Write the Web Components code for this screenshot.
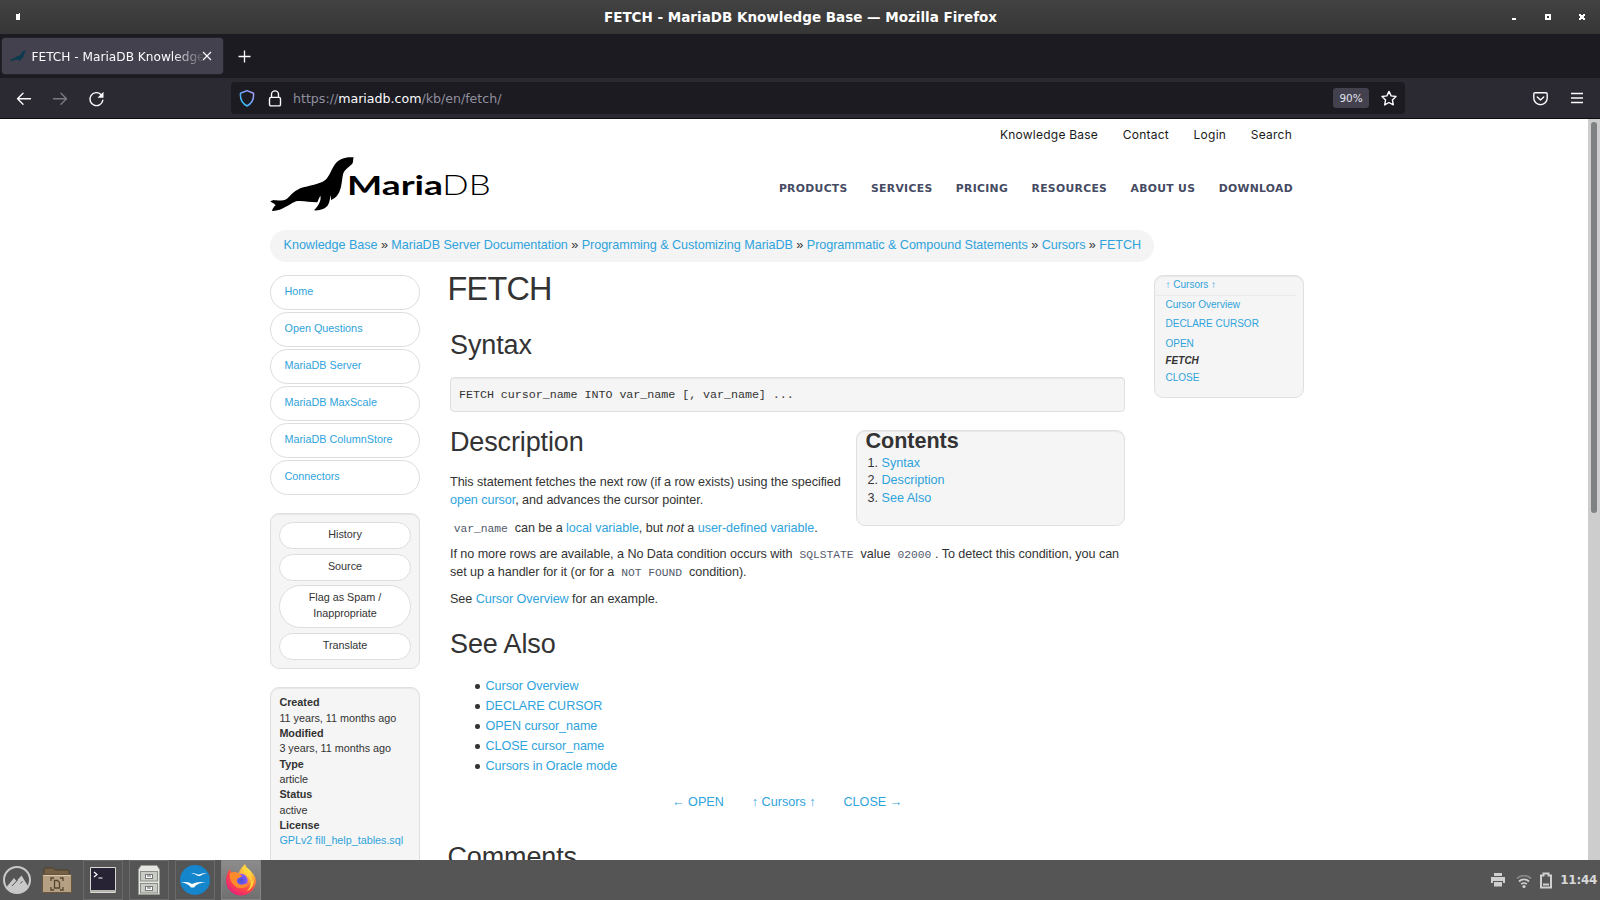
<!DOCTYPE html>
<html lang="en">
<head>
<meta charset="utf-8">
<title>FETCH - MariaDB Knowledge Base</title>
<style>
html,body{margin:0;height:100%;overflow:hidden;background:#fff}
body{font-family:"Liberation Sans",Arial,sans-serif;color:#333}
</style>
</head>
<body>
<desktop-screen></desktop-screen>
<script>
const define = (name, css, html) => customElements.define(name, class extends HTMLElement {
  constructor() {
    super();
    const t = document.createElement('template');
    t.innerHTML = `<style>*{box-sizing:border-box}:host{display:block;box-sizing:border-box}a{color:#2ea3dc;text-decoration:none}${css}</style>${html}`;
    this.attachShadow({mode: 'open'}).append(t.content.cloneNode(true));
  }
});

define('window-title', `
:host{height:34px;background:linear-gradient(#424242,#363636);color:#fff;display:grid;grid-template-columns:120px 1fr 120px;align-items:center;font:bold 13.5px/34px "DejaVu Sans",sans-serif}
b{text-align:center;white-space:nowrap;line-height:34px;padding-left:1px}
svg{display:block}
.r{display:flex;justify-content:flex-end}`,
`<svg width="40" height="34" shape-rendering="crispEdges"><path fill="#fff" d="M16 14h3v-1h1v7h-4z"/></svg>
<b>FETCH - MariaDB Knowledge Base — Mozilla Firefox</b>
<svg class="r" width="120" height="34" shape-rendering="crispEdges"><g fill="#fff"><path d="M32 18h4v2h-4z"/><path fill-rule="evenodd" d="M65 14h6v6h-6zM67 16v2h2v-2z"/><path d="M99 14h2v1h2v-1h2v2h-1v2h1v2h-2v-1h-2v1h-2v-2h1v-2h-1z"/></g></svg>`);

define('tab-strip', `
:host{height:44px;background:#1c1b22;display:flex;align-items:flex-start;padding:4px 0 0 2px;color:#fbfbfe;font:12.15px/36px "DejaVu Sans",sans-serif}
.tab{width:221px;height:36px;background:#42414d;border-radius:4px;display:flex;align-items:center;padding-left:8px;box-shadow:0 0 1px #666}
.t{width:171px;margin:2px 0 0 5.500px;line-height:36px;overflow:hidden;white-space:nowrap;-webkit-mask-image:linear-gradient(90deg,#000 82%,transparent 102%)}
svg{flex:none}
.plus{margin:12px 0 0 15px}`,
`<div class="tab"><svg width="16" height="16" viewBox="0 0 16 16"><path fill="#0c3a4e" d="M16 2.5c-3-.1-4 1.200-5 3.500-1 2-4 2-6 3.500-1.500 1.600-2.500 1.700-5 1.600l1 .9-.4 1.100c2 .2 3-1.200 5-1.400l3-.1 0 1.400c1.500-.3 2.500-1.400 3-2.600 2-.8 2-3 2.600-5 .5-1.200 1.800-1.500 1.800-2.900z"/></svg><span class="t">FETCH - MariaDB Knowledge</span><svg width="10" height="10" viewBox="0 0 10 10" style="margin-left:-1px"><path d="M1 1l8 8M9 1l-8 8" stroke="#fbfbfe" stroke-width="1.200"/></svg></div>
<svg class="plus" width="13" height="13"><path d="M6.500 .5v12M.5 6.500h12" stroke="#fbfbfe" stroke-width="1.300"/></svg>`);

define('nav-toolbar', `
:host{height:41px;background:#2b2a33;border-bottom:1px solid #0c0c0d;display:flex;align-items:center;color:#fbfbfe;font:12.15px/32px "DejaVu Sans",sans-serif;position:relative}
svg{flex:none;display:block;fill:none;stroke:#fbfbfe;stroke-width:1.400;stroke-linecap:round;stroke-linejoin:round;transform:translateY(.7px)}
.url{width:1174px;height:32px;margin-left:126.500px;background:#1c1b22;border-radius:4px;display:flex;align-items:center;padding:0 8px 0 8px}
.url svg{transform:translateY(.4px)}
.addr{margin:2px 0 0 11px;color:#8f8f9d;white-space:nowrap;flex:1;font-size:12.600px}
.addr b{font-weight:400;color:#fbfbfe}
.zoom{font-size:10.450px;line-height:19px;padding-top:1px;width:36px;text-align:center;background:#42414d;border-radius:3px;color:#e4e4ee;margin-right:12px}`,
`<svg width="16" height="16" viewBox="0 0 16 16" style="margin-left:16px"><path d="M14.500 8H1.500M7 2.500L1.500 8 7 13.500"/></svg>
<svg width="16" height="16" viewBox="0 0 16 16" style="margin-left:20px;stroke:#7a7982"><path d="M1.500 8h13M9 2.500L14.500 8 9 13.500"/></svg>
<svg width="17" height="17" viewBox="0 0 17 17" style="margin-left:19.500px"><path d="M14.800 9.600A6.500 6.500 0 1 1 13 3.800"/><path fill="#fbfbfe" stroke="none" d="M15.500 1v6h-6z"/></svg>
<div class="url">
<svg width="16" height="18" viewBox="0 0 16 18"><defs><linearGradient id="g" x1="1" y1="0" x2="0" y2="1"><stop stop-color="#b29cff"/><stop offset=".5" stop-color="#6ea6ff"/><stop offset="1" stop-color="#1cc8f0"/></linearGradient></defs><path stroke="url(#g)" stroke-width="1.500" d="M8 1.200L14.500 3.800C15 9 13 14 8 16.600 3 14 1 9 1.500 3.800z"/></svg>
<svg width="14" height="18" viewBox="0 0 14 18" style="margin-left:13px"><rect x="1.500" y="8" width="11" height="8.500" rx="1.500"/><path d="M3.500 8V5a3.500 3.500 0 0 1 7 0v3"/></svg>
<span class="addr">https://<b>mariadb.com</b>/kb/en/fetch/</span>
<span class="zoom">90%</span>
<svg width="16" height="16" viewBox="0 0 16 16"><path d="M8 1l2.100 4.500 4.900.6-3.600 3.400.9 5L8 12.100 3.700 14.500l.9-5L1 6.100l4.900-.6z"/></svg></div>
<svg width="15" height="14" viewBox="0 0 15 14" style="margin-left:127.500px"><path d="M2.200 1h10.600q1.400 0 1.400 1.400V6.500a6.700 6.500 0 0 1-13.400 0V2.400Q.8 1 2.200 1zM4.300 5.200l3.200 3 3.200-3"/></svg>
<svg width="12" height="12" viewBox="0 0 12 12" style="margin-left:23px;stroke-linecap:butt;stroke-width:1.300;transform:none"><path d="M0 1.500h12M0 6h12M0 10.500h12"/></svg>`);

define('maria-logo', `svg{display:block;overflow:visible}`,
`<svg width="220" height="57" viewBox="30 120 660 171"><path d="M281 127C262 125 240 131 230 142C217 155 213 175 200 191C188 205 160 209 130 217C103 225 94 240 81 251C68 259 50 256 41 255L31 259C37 264 44 267 47 270C41 276 37 282 36 288C48 287 57 285 66 281C83 275 92 265 108 259C130 256 153 263 172 262Q176 251 181 242C184 254 179 268 162 286C178 288 197 281 204 270C210 260 209 250 213 241L213 255C231 249 241 230 244 210C249 185 246 172 260 161L277 146C281 140 278 134 281 127Z"/>
<text x="261" y="240" font-family="Lato" font-weight="700" font-size="82" textLength="288" lengthAdjust="spacingAndGlyphs">Maria</text><text x="547" y="240" font-family="Lato" font-weight="300" font-size="82" textLength="145" lengthAdjust="spacingAndGlyphs">DB</text></svg>`);

define('site-header', `
:host{position:relative;height:111px;padding:0 11px 0 0}
.top{display:flex;justify-content:flex-end;gap:24.700px;font:12px/32px Inter,sans-serif;color:#1a1a1a;white-space:nowrap;letter-spacing:.23px;height:32px;padding-right:1px}
.row{display:flex;justify-content:space-between;height:57px;margin-top:4px}
.nav{display:flex;gap:23.350px;font:bold 10.800px/67px "DejaVu Sans",sans-serif;letter-spacing:.32px;color:#454b63;white-space:nowrap}`,
`<div class="top"><span>Knowledge Base</span><span>Contact</span><span>Login</span><span>Search</span></div>
<div class="row"><maria-logo></maria-logo><div class="nav"><span>PRODUCTS</span><span>SERVICES</span><span>PRICING</span><span>RESOURCES</span><span>ABOUT US</span><span>DOWNLOAD</span></div></div>`);

define('crumb-bar', `
:host{width:884px;height:32px;border-radius:16px;background:#f4f4f4;padding-left:13.600px;font-size:12.600px;line-height:31px;white-space:nowrap;letter-spacing:-.047px}`,
`<a>Knowledge Base</a> » <a>MariaDB Server Documentation</a> » <a>Programming &amp; Customizing MariaDB</a> » <a>Programmatic &amp; Compound Statements</a> » <a>Cursors</a> » <a>FETCH</a>`);

define('side-link', `:host{height:35px;border:1px solid #ddd;border-radius:18px;margin-bottom:2px;padding-left:13.500px;font-size:10.800px;line-height:31px}`, `<a><slot></slot></a>`);

define('kb-well', `:host{background:#f5f5f5;border:1px solid #e0e0e0;border-radius:9px;box-shadow:inset 0 1px 1px rgba(0,0,0,.06);padding:8px}`, `<slot></slot>`);

define('pill-button', `:host{background:#fff;border:1px solid #ddd;border-radius:22px;text-align:center;font-size:10.800px;line-height:16px;padding:3px 0 6px;margin-bottom:5px;height:27px}:host([tall]){height:43px;margin:-1px 0 5px}`, `<slot></slot>`);

define('side-column', `:host{width:150px}
kb-well.a{height:156px;margin:18px 0}
kb-well.i{height:240px;font-size:10.800px;line-height:15.350px;padding:7.400px 8.400px;letter-spacing:-.02px}`,
`<side-link>Home</side-link><side-link>Open Questions</side-link><side-link>MariaDB Server</side-link><side-link>MariaDB MaxScale</side-link><side-link>MariaDB ColumnStore</side-link><side-link>Connectors</side-link>
<kb-well class="a"><pill-button>History</pill-button><pill-button>Source</pill-button><pill-button tall>Flag as Spam /<br>Inappropriate</pill-button><pill-button>Translate</pill-button></kb-well>
<kb-well class="i"><b>Created</b><br>11 years, 11 months ago<br><b>Modified</b><br>3 years, 11 months ago<br><b>Type</b><br>article<br><b>Status</b><br>active<br><b>License</b><br><a>GPLv2 fill_help_tables.sql</a></kb-well>`);

define('contents-box', `:host{width:269px}
kb-well{height:96px;padding:0 9px 0 8.500px}
h3{margin:-1px 0 0;font-size:21.600px;line-height:22px;letter-spacing:-.05px}
ol{margin:2.500px 0 0;padding:0 0 0 16px;font-size:12.600px;line-height:17.500px;letter-spacing:0}
li{padding-left:0}`,
`<kb-well><h3>Contents</h3><ol><li><a>Syntax</a></li><li><a>Description</a></li><li><a>See Also</a></li></ol></kb-well>`);

define('kb-article', `:host{width:678px;padding-left:3px;font-size:12.600px;line-height:18px;white-space:nowrap;letter-spacing:-.055px}
h1,h2{font-weight:400;margin:0;letter-spacing:-.13px}
h1{font-size:32.400px;line-height:36px;margin:-4px 0 23px -2.500px;letter-spacing:-.75px}
h2{font-size:27px;line-height:30px}
pre{margin:17px 0 18px;height:35px;border:1px solid #e0e0e0;border-radius:4px;background:#f5f5f5;box-shadow:inset 0 1px 1px rgba(0,0,0,.05);font:11.700px/35px "Liberation Mono",monospace;letter-spacing:-.04px;padding-left:8px}
.d{display:flex;justify-content:space-between;height:107px}
.d h2{margin:-3px 0 16px}
p{margin:0 0 8px}
code{font:11.340px/1 "Liberation Mono",monospace;padding:0 3.700px;color:#535b6c}
ul{margin:17px 0 17px;padding-left:35.500px;line-height:20px;list-style:none}
li::before{content:"";float:left;width:4.500px;height:4.500px;border-radius:50%;background:#333;margin:8px 0 0 -10.500px}
.n{display:flex;gap:28px;padding-left:222px;letter-spacing:0}
.n i{font:10.500px/1 "DejaVu Sans",sans-serif}
.n i.v{font-size:12.600px;display:inline-block;width:7px;text-indent:-2px}
.c{margin:31px 0 0 -2.500px}`,
`<h1>FETCH</h1><h2>Syntax</h2><pre>FETCH cursor_name INTO var_name [, var_name] ...</pre>
<div class="d"><div><h2>Description</h2><p>This statement fetches the next row (if a row exists) using the specified<br><a>open cursor</a>, and advances the cursor pointer.</p><p style="margin-top:10px"><code>var_name</code> can be a <a>local variable</a>, but <i>not</i> a <a>user-defined variable</a>.</p></div><contents-box></contents-box></div>
<p style="margin-top:8px">If no more rows are available, a No Data condition occurs with <code>SQLSTATE</code> value <code>02000</code>. To detect this condition, you can<br>set up a handler for it (or for a <code>NOT FOUND</code> condition).</p>
<p style="margin-top:9px">See <a>Cursor Overview</a> for an example.</p>
<h2 style="margin-top:21px">See Also</h2>
<ul><li><a>Cursor Overview</a></li><li><a>DECLARE CURSOR</a></li><li><a>OPEN cursor_name</a></li><li><a>CLOSE cursor_name</a></li><li><a>Cursors in Oracle mode</a></li></ul>
<div class="n"><a>← OPEN</a><a>↑ Cursors ↑</a><a>CLOSE →</a></div>
<h2 class="c">Comments</h2>`);

define('series-nav', `:host{width:150px}
kb-well{height:123px;padding:0;font-size:10px;line-height:19.300px}
div{padding-left:10.500px}
.h{border-bottom:1px solid #eaeaea;width:141px;line-height:17px;height:20px;padding-top:0;margin-bottom:-1.500px}
.o{padding-top:.6px}
.f{line-height:16px;padding-top:.4px}`,
`<kb-well><div class="h"><a>↑ Cursors ↑</a></div><div><a>Cursor Overview</a></div><div><a>DECLARE CURSOR</a></div><div class="o"><a>OPEN</a></div><div class="f"><b><i>FETCH</i></b></div><div class="f"><a>CLOSE</a></div></kb-well>`);

define('web-page', `
:host{height:741px;overflow:hidden;display:grid;grid-template-columns:1fr 12px;background:#fff}
.p{padding:0 284px 0 270px;height:741px;overflow:hidden}
.g{display:grid;grid-template-columns:150px 678px 150px;column-gap:27px;margin-top:13px;justify-content:start}
series-nav{margin-left:2px}
.s{background:#cdcdcd;padding:3px 3px}
.s i{display:block;height:391px;border-radius:3px;background:#7f8282}`,
`<div class="p"><site-header></site-header><crumb-bar></crumb-bar><div class="g"><side-column></side-column><kb-article></kb-article><series-nav></series-nav></div></div><div class="s"><i></i></div>`);

define('task-bar', `
:host{height:40px;background:#555;display:flex;align-items:center;color:#d8d8d8;font:bold 12px/38px "DejaVu Sans",sans-serif}
svg{display:block;flex:none}
.b{width:40px;height:40px;border:1px solid #6a6a6a;margin-right:6px;display:grid;place-items:center;flex:none}
.on{background:linear-gradient(#8c8c8c,#707070);border-color:#858585}
.sp{flex:1}`,
`<svg width="28" height="28" viewBox="0 0 28 28" style="margin-left:3px"><circle cx="14" cy="14" r="13" fill="#555" stroke="#c9c9c9" stroke-width="2"/><path fill="#c9c9c9" d="M3.500 21L11 12l2.500 3L18.500 9.500 25 20A12.500 12.500 0 0 1 14 26.500 12.500 12.500 0 0 1 3.500 21z"/><path d="M9 20l5.500-6M17.500 17.500l2-2.500" stroke="#555" stroke-width="1"/></svg>
<svg width="32" height="28" viewBox="0 0 32 28" style="margin:0 10px 0 10px"><path fill="#756046" stroke="#4d3f2d" d="M3 14V3q0-1 1-1h8l2 2h13q1 0 1 1v9z"/><rect x="1.500" y="8.500" width="29" height="18" rx="1" fill="#b5a084" stroke="#6a563c"/><path d="M2.500 9.500h27" stroke="#d8c8ae"/><g fill="none" stroke="#56452f" stroke-width="1.300"><path d="M10 15v-3h3M19 12h3v3M22 21v3h-3M13 24h-3v-3"/><path d="M13.500 14.500h3l2 2v5.500h-5z"/></g></svg>
<div class="b"><svg width="26" height="26" viewBox="0 0 26 26"><rect width="26" height="26" rx="1" fill="#d8d8d0"/><rect x="1" y="1" width="24" height="22" fill="#272234"/><path d="M4 5l3 2.500-3 2.500M8.500 11h4" stroke="#fff" fill="none" stroke-width="1.200"/><path d="M0 24h26" stroke="#96968e"/></svg></div>
<div class="b"><svg width="24" height="32" viewBox="0 0 24 32"><path fill="#e5e6e1" stroke="#999b95" d="M4 1.500h16l2.500 4v25h-21v-25z"/><g fill="#c9cbc5" stroke="#8b8d87"><rect x="3.500" y="7.500" width="17" height="9.500"/><rect x="3.500" y="19.500" width="17" height="9.500"/></g><g fill="#fff" stroke="#777"><rect x="8.500" y="10.500" width="7" height="4"/><rect x="8.500" y="22.500" width="7" height="4"/></g><path d="M10 12h4M10 24h4" stroke="#555"/></svg></div>
<div class="b"><svg width="30" height="30" viewBox="0 0 30 30"><circle cx="15" cy="15" r="15" fill="#1585cc"/><path fill="#fff" d="M11 8.500q4-1 7.500 1.300Q22 7.500 27 8.500q-4.500 0-7 2.500h-2Q15.500 8.500 11 8.500zM1 17.500q7-1.500 11 1.500Q18 16 26 17.500q-8.500 0-12 5h-3Q8 18 1 17.500z"/></svg></div>
<div class="b on"><svg width="32" height="32" viewBox="0 0 32 32"><defs><radialGradient id="f" cx=".75" cy=".15" r="1"><stop stop-color="#fff44f"/><stop offset=".35" stop-color="#ffa436"/><stop offset=".65" stop-color="#ff4a45"/><stop offset="1" stop-color="#e31587"/></radialGradient><radialGradient id="p"><stop stop-color="#4553d0"/><stop offset="1" stop-color="#9059ff"/></radialGradient></defs><path fill="url(#f)" d="M20 0c1 4 4 5 6 7.500 4 4 5.500 8 4.700 12A15 15 0 0 1 1 17C1 12 2 8.500 5 5l1.500 4c3-1.800 4.500-.8 7 .3C15 5.500 17 3 20 0z"/><circle cx="16" cy="16.500" r="6.700" fill="url(#p)"/><path fill="#ff8a2b" d="M5 9q4-1.500 7.500.2l4.500 2.300c0 2-3.500 2-4.500 3.300-1.500 2 0 6 4 6 3 0 4.500-2 7-1-3 5-9 5.500-12.500 3C6 19 4 14 5 9z"/><path fill="#ffd43a" d="M20.500 1c1 6 7 8 6.500 17 1-2 1-3 .8-5 3 7-2 13-6 14 5-4 5-11 1.500-15C20 9 18 7 20.500 1z"/></svg></div>
<div class="sp"></div>
<svg width="14" height="14" viewBox="0 0 14 14" fill="#cfcfcf"><path d="M3 0h8v3H3zM0 4h14v6h-2V8H2v2H0zM3 9h8v4.500H3z"/></svg>
<svg width="16" height="16" viewBox="0 0 16 16" style="margin:1px 8px 0 11px" fill="none" stroke="#cfcfcf" stroke-width="1.800"><path stroke="#858585" d="M1 5.500a10 10 0 0 1 14 0"/><path d="M3 8.500a7 7 0 0 1 10 0M5.200 11.200a4 4 0 0 1 5.600 0"/><circle cx="8" cy="13.500" r="1.600" fill="#cfcfcf" stroke="none"/></svg>
<svg width="12" height="17" viewBox="0 0 12 17" style="margin-right:8px"><path d="M1 3.500h2.500V1.500h5v2H11V15.500H1z" fill="none" stroke="#cfcfcf" stroke-width="2"/><path d="M3 11.500h6v2H3z" fill="#cfcfcf"/></svg>
<span style="margin-right:3px;letter-spacing:-.3px">11:44</span>`);

define('desktop-screen', `:host{width:1600px;height:900px;overflow:hidden}`,
`<window-title></window-title><tab-strip></tab-strip><nav-toolbar></nav-toolbar><web-page></web-page><task-bar></task-bar>`);
</script>
</body>
</html>
